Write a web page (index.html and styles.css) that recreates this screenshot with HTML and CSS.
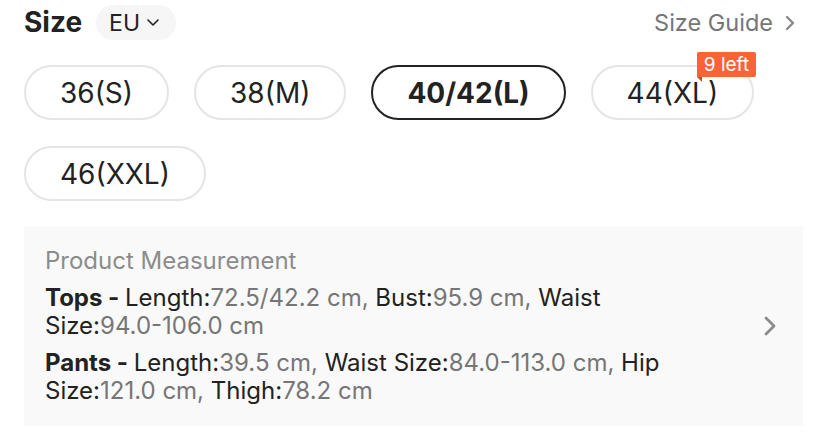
FILE: index.html
```html
<!DOCTYPE html>
<html lang="en">
<head>
    <meta charset="UTF-8">
    <title>Size</title>
    <link rel="stylesheet" href="styles.css">
</head>
<body>
    <div class="panel">
        <div class="header">
            <div class="title">
                <h2>Size</h2>
                <button class="unit">EU
                    <svg width="14" height="9" viewBox="0 0 14 9"><path d="M2 2l5 5 5-5" fill="none" stroke="#222" stroke-width="1.6" stroke-linecap="round" stroke-linejoin="round"/></svg>
                </button>
            </div>
            <a class="guide">Size Guide
                <svg width="10" height="16" viewBox="0 0 10 16"><path d="M2 2l6 6-6 6" fill="none" stroke="#888" stroke-width="2.4" stroke-linecap="round" stroke-linejoin="round"/></svg>
            </a>
        </div>

        <div class="sizes">
            <button class="size">36(S)</button>
            <button class="size">38(M)</button>
            <button class="size active">40/42(L)</button>
            <button class="size">44(XL)<span class="badge">9 left</span></button>
            <button class="size">46(XXL)</button>
        </div>

        <div class="measure">
            <div class="measure-text">
                <p class="caption">Product Measurement</p>
                <p><b>Tops - </b><span class="item">Length:<span class="val">72.5/42.2 cm,</span></span> <span class="item">Bust:<span class="val">95.9 cm,</span></span> Waist <span class="item">Size:<span class="val">94.0-106.0 cm</span></span></p>
                <p><b>Pants - </b><span class="item">Length:<span class="val">39.5 cm,</span></span> Waist <span class="item">Size:<span class="val">84.0-113.0 cm,</span></span> Hip <span class="item">Size:<span class="val">121.0 cm,</span></span> <span class="item">Thigh:<span class="val">78.2 cm</span></span></p>
            </div>
            <svg class="arrow" width="14" height="22" viewBox="0 0 14 22"><path d="M3 3l8 8-8 8" fill="none" stroke="#8a8a8a" stroke-width="2.8" stroke-linecap="round" stroke-linejoin="round"/></svg>
        </div>
    </div>
</body>
</html>
```

FILE: styles.css
```css
:root {
    --text: #222222;
    --muted: #767676;
    --border: #e5e5e5;
    --soft: #f6f6f6;
    --badge: #fa6338;
}

* {
    margin: 0;
    padding: 0;
    box-sizing: border-box;
}

body {
    font-family: Inter, "Noto Sans", sans-serif;
    color: var(--text);
    background: #ffffff;
}

.panel {
    padding: 5px 25px 0 24px;
}

.header {
    display: flex;
    justify-content: space-between;
    align-items: center;
    height: 35px;
}

.title {
    display: flex;
    align-items: center;
    gap: 14px;
}

h2 {
    font-size: 28px;
    font-weight: 700;
    line-height: 35px;
}

.unit {
    display: flex;
    align-items: center;
    gap: 6px;
    height: 35px;
    padding: 0 16px 0 13px;
    border: none;
    border-radius: 18px;
    background: var(--soft);
    font-family: inherit;
    font-size: 23px;
    color: var(--text);
}

.guide {
    display: flex;
    align-items: center;
    gap: 12px;
    font-size: 23.5px;
    color: var(--muted);
    padding-right: 8px;
}

.sizes {
    display: flex;
    flex-wrap: wrap;
    gap: 26px 25px;
    margin-top: 25px;
}

.size {
    position: relative;
    height: 55px;
    padding: 0 34px;
    border: 2px solid var(--border);
    border-radius: 28px;
    background: #ffffff;
    font-family: inherit;
    font-size: 28px;
    color: var(--text);
}

.size.active {
    border-color: var(--text);
    font-weight: 700;
}

.badge {
    position: absolute;
    top: -15px;
    right: -4px;
    height: 25px;
    padding: 0 7px;
    border-radius: 2px 2px 2px 0;
    background: var(--badge);
    color: #ffffff;
    font-size: 19px;
    font-weight: 400;
    line-height: 25px;
}

.badge::after {
    content: "";
    position: absolute;
    left: 0;
    bottom: -5px;
    border-top: 5px solid #d24a25;
    border-left: 5px solid transparent;
}

.measure {
    display: flex;
    align-items: center;
    margin-top: 25px;
    padding: 21px 26px 21px 21px;
    background: #f9f9f9;
}

.measure-text {
    flex: 1;
    padding-right: 30px;
    font-size: 24px;
    line-height: 28px;
}

.measure-text p + p {
    margin-top: 9px;
}

.item {
    white-space: nowrap;
}

.caption {
    color: #8c8c8c;
}

.val {
    color: var(--muted);
}

.arrow {
    flex: none;
}
```
